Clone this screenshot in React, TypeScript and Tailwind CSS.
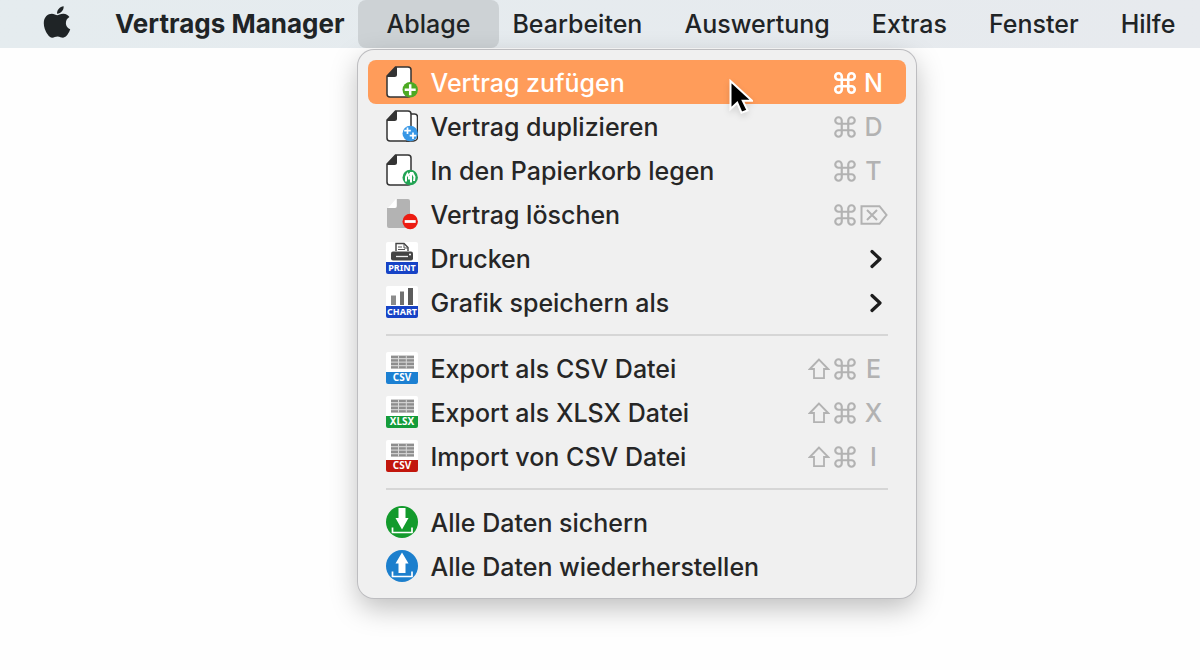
import type { ReactNode } from 'react';
import { FaApple } from 'react-icons/fa';
import { Command } from 'lucide-react';
import clsx from 'clsx';

type MenuEntry = {
  label: string;
  icon: ReactNode;
  shift?: boolean;
  shortcut?: string;
  submenu?: boolean;
  active?: boolean;
};

const DocumentIcon = ({ badge, stacked }: { badge: ReactNode; stacked?: boolean }) => (
  <svg viewBox="0 0 32 32" className="size-8 shrink-0" fill="none" aria-hidden="true">
    {stacked && <path d="M23 4h5.500a3 3 0 0 1 3 3v20a4 4 0 0 1-4 4H20" fill="#fff" stroke="#333" strokeWidth="1.500" />}
    <path d="M9.500 1H22a3 3 0 0 1 3 3v24a3 3 0 0 1-3 3H4a3 3 0 0 1-3-3V10z" fill="#fff" stroke="#333" strokeWidth="1.500" />
    <path d="M9.500 1 1 10v1h7.500a2.500 2.500 0 0 0 2.500-2.500V1z" fill="#333" />
    {badge}
  </svg>
);

const AddIcon = () => (
  <DocumentIcon badge={
    <>
      <circle cx="24.200" cy="23.700" r="7.700" fill="#4caa22" />
      <path d="M24.200 18.200v11M18.700 23.700h11" stroke="#fff" strokeWidth="2.500" />
    </>
  } />
);

const DuplicateIcon = () => (
  <DocumentIcon stacked badge={
    <>
      <circle cx="24.200" cy="23.500" r="7.700" fill="#3797e6" />
      <path d="M21.500 17.500v6.500M18.200 20.700h6.600M27 22.500v6.500M23.700 25.700h6.600" stroke="#fff" strokeWidth="1.700" />
    </>
  } />
);

const TrashDocumentIcon = () => (
  <DocumentIcon badge={
    <>
      <circle cx="24.200" cy="23.500" r="7.700" fill="#23a455" />
      <path d="M20 27.500v-4.500l1.500-3 1.500 2.500v3M25 28.500v-9.500h1.500l2 4-.5 4" stroke="#fff" strokeWidth="2" />
      <path d="M25 18.500l-2.500 2.500" stroke="#fff" strokeWidth="1.500" />
    </>
  } />
);

const DeleteIcon = () => (
  <svg viewBox="0 0 32 32" className="size-8 shrink-0" aria-hidden="true">
    <path d="M2 10 10 1v9z" fill="#fff" />
    <path d="M11 1h11a2 2 0 0 1 2 2v25a2 2 0 0 1-2 2H3a2 2 0 0 1-2-2V10h8a2 2 0 0 0 2-2z" fill="#b3b3b3" />
    <circle cx="24.200" cy="23.500" r="7.700" fill="#ec1c12" />
    <path d="M18.700 23.500h11" stroke="#fff" strokeWidth="2.800" />
  </svg>
);

const LabelIcon = ({ text, color, children }: { text: string; color: string; children: ReactNode }) => (
  <svg viewBox="0 0 32 32" className="size-8 shrink-0" aria-hidden="true">
    <rect width="32" height="32" rx="2" fill="#fff" />
    <path d="M0 20h32v10a2 2 0 0 1-2 2H2a2 2 0 0 1-2-2z" fill={color} />
    {children}
    <text x="16" y="29" textAnchor="middle" fill="#fff" className={clsx("font-['Noto_Sans',sans-serif] font-bold", text.length > 4 ? 'text-[9px]' : 'text-[10px]')}>{text}</text>
  </svg>
);

const PrintIcon = () => (
  <LabelIcon text="PRINT" color="#1743c6">
    <path d="M10 9V1.500h8l4 4V9" fill="#fff" stroke="#444" strokeWidth="1.400" />
    <path d="M18 1.500V6h4M12 5h4M12 7.500h7" fill="none" stroke="#555" strokeWidth="1" />
    <path d="M7 9.500h18a2 2 0 0 1 2 2v5a2 2 0 0 1-2 2H7a2 2 0 0 1-2-2v-5a2 2 0 0 1 2-2z" fill="#444" />
    <path d="M10 14.500h12" stroke="#eee" strokeWidth="1.300" />
    <circle cx="24" cy="12.500" r="1" fill="#fff" />
  </LabelIcon>
);

const ChartIcon = () => (
  <LabelIcon text="CHART" color="#1743c6">
    <path d="M5 9.500h5V19H5z" fill="#8c8c8c" />
    <path d="M14 5.500h4V19h-4z" fill="#707070" />
    <path d="M22 2h5v17h-5z" fill="#5c5c5c" />
  </LabelIcon>
);

const TableIcon = ({ text, color }: { text: string; color: string }) => (
  <LabelIcon text={text} color={color}>
    <path d="M5 3.500h23v13H5z" fill="#cfcfcf" />
    <path d="M5 4.800h23M5 8.300h23M5 11.800h23M5 15.300h23" stroke="#8e8e8e" strokeWidth="2.300" />
    <path d="M12.500 3.500v13M20.300 3.500v13" stroke="#d8d8d8" strokeWidth="1" />
  </LabelIcon>
);

const TransferIcon = ({ up }: { up?: boolean }) => (
  <svg viewBox="0 0 32 32" className="size-8 shrink-0" fill="#fff" aria-hidden="true">
    <circle cx="16" cy="16" r="16" fill={up ? '#1c7fcd' : '#139a2c'} />
    <path d={up ? 'M16 2.500 22.500 13.500H19.500v9.500h-7v-9.500H9.500z' : 'M12.500 2h7v10h3L16 23.500 9.500 12h3z'} />
    <path d="M6.500 21.500v5h19.500v-5" fill="none" stroke="#fff" strokeWidth="1.700" />
  </svg>
);

const ShiftKey = () => (
  <svg viewBox="0 0 22 22" className="mr-0.5 w-[22px]" fill="none" stroke="currentColor" strokeWidth="1.800" aria-hidden="true">
    <path d="M11 1.500 1.800 11H6v9.200h10V11h4.200z" />
  </svg>
);

const ForwardDeleteKey = () => (
  <svg viewBox="0 0 28 20" className="w-7" fill="none" stroke="currentColor" strokeWidth="2" aria-hidden="true">
    <path d="M1.500 1.200h18L26.500 10l-7 8.800h-18zM7 5l10 10M17 5 7 15" />
  </svg>
);

const SubmenuArrow = () => (
  <svg viewBox="0 0 12 20" className="mt-0.5 mr-1.5 h-5 w-3" fill="none" stroke="#1c1c1c" strokeWidth="3.200" strokeLinecap="round" strokeLinejoin="round" aria-hidden="true">
    <path d="m2 2.500 8 7.500-8 7.500" />
  </svg>
);

const menuGroups: MenuEntry[][] = [
  [
    { label: 'Vertrag zufügen', icon: <AddIcon />, shortcut: 'N', active: true },
    { label: 'Vertrag duplizieren', icon: <DuplicateIcon />, shortcut: 'D' },
    { label: 'In den Papierkorb legen', icon: <TrashDocumentIcon />, shortcut: 'T' },
    { label: 'Vertrag löschen', icon: <DeleteIcon />, shortcut: 'Delete' },
    { label: 'Drucken', icon: <PrintIcon />, submenu: true },
    { label: 'Grafik speichern als', icon: <ChartIcon />, submenu: true },
  ],
  [
    { label: 'Export als CSV Datei', icon: <TableIcon text="CSV" color="#1c80d2" />, shift: true, shortcut: 'E' },
    { label: 'Export als XLSX Datei', icon: <TableIcon text="XLSX" color="#149c3a" />, shift: true, shortcut: 'X' },
    { label: 'Import von CSV Datei', icon: <TableIcon text="CSV" color="#c2160c" />, shift: true, shortcut: 'I' },
  ],
  [
    { label: 'Alle Daten sichern', icon: <TransferIcon /> },
    { label: 'Alle Daten wiederherstellen', icon: <TransferIcon up /> },
  ],
];

const menuTitles = ['Bearbeiten', 'Auswertung', 'Extras', 'Fenster', 'Hilfe'];

function MenuRow({ entry }: { entry: MenuEntry }) {
  return (
    <button
      type="button"
      role="menuitem"
      className={clsx('flex h-11 w-full items-center rounded-lg px-[18px] text-left', entry.active ? 'bg-[#ff9c5a] text-white' : 'text-[#262626]')}
    >
      {entry.icon}
      <span className="ml-[13px] flex-1 pt-0.5 font-medium whitespace-nowrap">{entry.label}</span>
      {entry.shortcut && (
        <span className={clsx('flex items-center pt-0.5', entry.active ? 'font-medium text-white' : 'text-[#b2b2b2]')}>
          {entry.shift && <ShiftKey />}
          <Command size={26} strokeWidth={entry.active ? 2.4 : 2} aria-hidden="true" />
          <span className="ml-0.5 flex w-7 justify-center">
            {entry.shortcut === 'Delete' ? <ForwardDeleteKey /> : entry.shortcut}
          </span>
        </span>
      )}
      {entry.submenu && <SubmenuArrow />}
    </button>
  );
}

function FileMenu() {
  return (
    <div role="menu" aria-label="Ablage" className="absolute top-full left-0 mt-0.5 w-[558px] rounded-2xl bg-[#f0f0f0] p-2.5 shadow-[0_0_0_1px_#bdbdc0,0_10px_28px_rgba(0,0,0,0.26)]">
      {menuGroups.map((group, index) => (
        <div key={index}>
          {index > 0 && <hr className="mx-[18px] my-2.5 border-t-2 border-[#d6d6d6]" />}
          {group.map((entry) => <MenuRow key={entry.label} entry={entry} />)}
        </div>
      ))}
      <svg viewBox="0 0 24 40" className="absolute top-7 left-[371px] h-10 w-6 drop-shadow-md" aria-hidden="true">
        <path d="M1.500 3v28l6.700-6.300 4.300 10 6-2.300-4.700-9.600H23z" fill="#000" stroke="#fff" strokeWidth="2" />
      </svg>
    </div>
  );
}

function App() {
  return (
    <div className="min-h-screen bg-[#fefefe] font-[Inter,'Liberation_Sans',sans-serif] text-[25px] leading-8 text-[#1f2426]">
      <nav className="flex h-12 items-center gap-[42px] bg-linear-to-r from-[#e5ecef] to-[#e7eaee] pl-[39px] font-medium whitespace-nowrap">
        <button type="button" aria-label="Apple" className="-mt-1 -mr-0.5"><FaApple size={36} /></button>
        <button type="button" className="text-[26px] font-bold">Vertrags Manager</button>
        <div className="relative -mx-[29px] h-12">
          <button type="button" aria-haspopup="menu" aria-expanded="true" className="h-12 rounded-lg bg-[#cdd2d5] px-[29px]">Ablage</button>
          <FileMenu />
        </div>
        {menuTitles.map((title) => <button key={title} type="button">{title}</button>)}
      </nav>
    </div>
  );
}

export default App;
